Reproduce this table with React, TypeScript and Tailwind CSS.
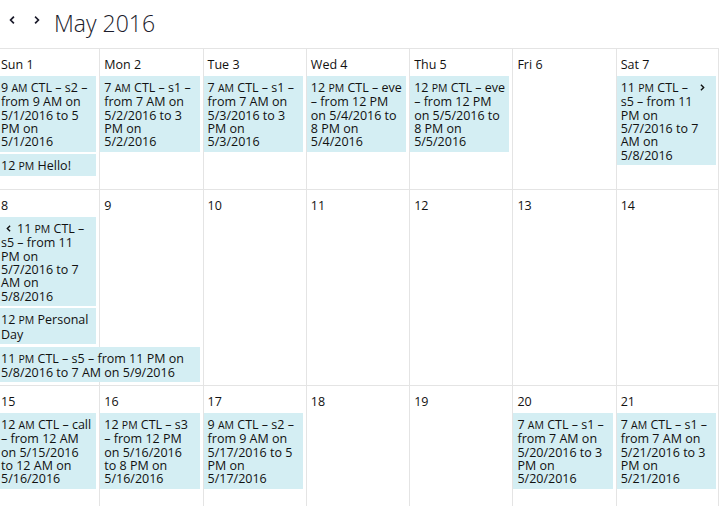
import React from "react";

type Ev = {
  h: string;
  ap: string;
  lines: string[];
  chevron?: "left" | "right";
};

type Week = {
  labels: string[];
  stacks: Ev[][];
  span?: Ev;
  height: string;
};

const colStart = [
  "col-start-1",
  "col-start-2",
  "col-start-3",
  "col-start-4",
  "col-start-5",
  "col-start-6",
  "col-start-7",
];

function Chevron({ dir, className }: { dir: "left" | "right"; className?: string }) {
  return (
    <svg viewBox="0 0 6 8" className={className} fill="none" stroke="currentColor" strokeWidth={1.7} strokeLinecap="square" strokeLinejoin="miter">
      <polyline points={dir === "left" ? "4.3,1.3 1.6,4 4.3,6.7" : "1.7,1.3 4.4,4 1.7,6.7"} />
    </svg>
  );
}

function EventBox({ ev }: { ev: Ev }) {
  return (
    <div className="bg-[#d4eef3] pl-[4px] pr-[3px] pt-[5px] pb-[3px] flex text-[12.5px] leading-[13.33px] text-[#111]">
      <div className="flex-1 min-w-0">
        {ev.lines.map((l, i) => (
          <div key={i} className="whitespace-nowrap">
            {i === 0 && (
              <>
                {ev.chevron === "left" && (
                  <Chevron dir="left" className="inline-block w-[5px] h-[7px] ml-[5px] mr-[6px] align-[1px]" />
                )}
                {ev.h} <span className="text-[10.5px]">{ev.ap}</span>
              </>
            )}
            {l}
          </div>
        ))}
      </div>
      {ev.chevron === "right" && (
        <Chevron dir="right" className="w-[5px] h-[7px] mt-[3px] mr-[8px] shrink-0" />
      )}
    </div>
  );
}

const s1 = (d: string): Ev => ({
  h: "7",
  ap: "AM",
  lines: [" CTL – s1 –", "from 7 AM on", `${d} to 3`, "PM on", d],
});
const s2 = (d: string): Ev => ({
  h: "9",
  ap: "AM",
  lines: [" CTL – s2 –", "from 9 AM on", `${d} to 5`, "PM on", d],
});
const eve = (d: string): Ev => ({
  h: "12",
  ap: "PM",
  lines: [" CTL – eve", "– from 12 PM", `on ${d} to`, "8 PM on", d],
});

const weeks: Week[] = [
  {
    labels: ["Sun 1", "Mon 2", "Tue 3", "Wed 4", "Thu 5", "Fri 6", "Sat 7"],
    stacks: [
      [s2("5/1/2016"), { h: "12", ap: "PM", lines: [" Hello!"] }],
      [s1("5/2/2016")],
      [s1("5/3/2016")],
      [eve("5/4/2016")],
      [eve("5/5/2016")],
      [],
      [
        {
          h: "11",
          ap: "PM",
          lines: [" CTL –", "s5 – from 11", "PM on", "5/7/2016 to 7", "AM on", "5/8/2016"],
          chevron: "right",
        },
      ],
    ],
    height: "h-[141px]",
  },
  {
    labels: ["8", "9", "10", "11", "12", "13", "14"],
    stacks: [
      [
        {
          h: "11",
          ap: "PM",
          lines: [" CTL –", "s5 – from 11", "PM on", "5/7/2016 to 7", "AM on", "5/8/2016"],
          chevron: "left",
        },
        { h: "12", ap: "PM", lines: [" Personal", "Day"] },
      ],
      [],
      [],
      [],
      [],
      [],
      [],
    ],
    span: {
      h: "11",
      ap: "PM",
      lines: [" CTL – s5 – from 11 PM on", "5/8/2016 to 7 AM on 5/9/2016"],
    },
    height: "h-[196px]",
  },
  {
    labels: ["15", "16", "17", "18", "19", "20", "21"],
    stacks: [
      [
        {
          h: "12",
          ap: "AM",
          lines: [" CTL – call", "– from 12 AM", "on 5/15/2016", "to 12 AM on", "5/16/2016"],
        },
      ],
      [
        {
          h: "12",
          ap: "PM",
          lines: [" CTL – s3", "– from 12 PM", "on 5/16/2016", "to 8 PM on", "5/16/2016"],
        },
      ],
      [s2("5/17/2016")],
      [],
      [],
      [s1("5/20/2016")],
      [s1("5/21/2016")],
    ],
    height: "h-[121px]",
  },
];

export default function App() {
  return (
    <div className="w-[720px] h-[506px] overflow-hidden bg-white font-['Open_Sans',sans-serif] text-[#111]">
      <div className="h-[48px] flex items-start">
        <Chevron dir="left" className="w-[6px] h-[8px] ml-[9px] mt-[16px] text-[#1a1a2a]" />
        <Chevron dir="right" className="w-[6px] h-[8px] ml-[19px] mt-[16px] text-[#1a1a2a]" />
        <div className="ml-[14px] mt-[8px] text-[23px] leading-[30px] font-light text-[#1c1c2c]">May 2016</div>
      </div>
      <div className="ml-[-4px] w-[723px]">
        {weeks.map((w, wi) => (
          <div key={wi} className={`grid grid-cols-7 grid-rows-[28px_auto_auto_1fr] ${w.height}`}>
            {w.labels.map((_, i) => (
              <div
                key={"bg" + i}
                className={`${colStart[i]} row-span-full border-l border-t border-[#e4e4e4] ${i === 6 ? "border-r" : ""}`}
              />
            ))}
            {w.labels.map((l, i) => (
              <div key={"l" + i} className={`${colStart[i]} row-start-1 pl-[5px] pt-[9px] text-[12.5px] leading-[16px]`}>
                {l}
              </div>
            ))}
            {w.stacks.map((st, i) =>
              st.length ? (
                <div key={"s" + i} className={`${colStart[i]} row-start-2 flex flex-col gap-[2.5px] pl-[1px] pr-[3px]`}>
                  {st.map((ev, k) => (
                    <EventBox key={k} ev={ev} />
                  ))}
                </div>
              ) : null
            )}
            {w.span && (
              <div className="col-start-1 col-span-2 row-start-3 pl-[1px] pr-[3px] pt-[2.5px]">
                <EventBox ev={w.span} />
              </div>
            )}
          </div>
        ))}
      </div>
    </div>
  );
}
